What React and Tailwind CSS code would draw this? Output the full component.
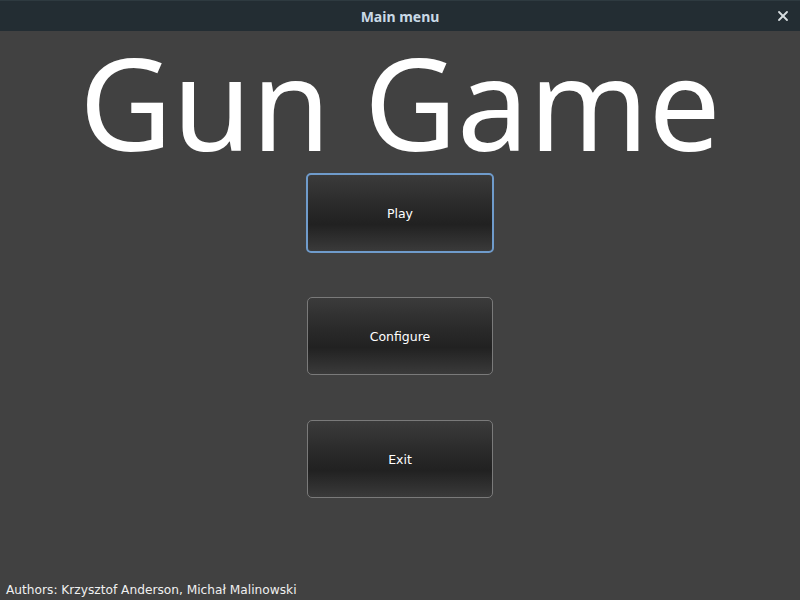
import { X } from 'lucide-react';

function MenuButton({ label, focused }) {
  return (
    <button
      className={`rounded-[5px] flex items-center justify-center pt-[2px] text-[12.5px] text-white bg-[linear-gradient(to_bottom,#3b3b3b_0%,#2a2a2a_40%,#212121_65%,#3a3a3a_100%)] ${
        focused ? 'w-[188px] h-[80px] border-2 border-[#6f9bcb]' : 'w-[186px] h-[78px] border border-[#7a7a7a]'
      }`}
      style={{ fontFamily: '"DejaVu Sans", sans-serif' }}
    >
      {label}
    </button>
  );
}

export default function App() {
  return (
    <div className="w-[800px] h-[600px] bg-[#414141] flex flex-col overflow-hidden" style={{ fontFamily: '"Noto Sans", sans-serif' }}>
      {/* Title bar */}
      <div className="h-[31px] bg-[#232d33] border-t border-[#2e3a40] relative flex items-center justify-center shrink-0">
        <span className="text-[14px] font-bold text-[#c9d9e6]">Main menu</span>
        <X className="absolute right-[9px] top-[7px] text-[#d7dde0]" size={16} strokeWidth={2.75} />
      </div>

      {/* Body */}
      <div className="flex-1 flex flex-col items-center relative">
        <h1 className="text-[128px] leading-none text-white mt-[7px] h-[135px]">Gun Game</h1>
        <div className="flex flex-col items-center">
          <MenuButton label="Play" focused />
          <div className="mt-[44px]"><MenuButton label="Configure" /></div>
          <div className="mt-[45px]"><MenuButton label="Exit" /></div>
        </div>
        <div className="mt-auto self-start pl-[6px] pb-[1px] text-[12.2px] text-[#f0f0f0]" style={{ fontFamily: '"DejaVu Sans", sans-serif' }}>
          Authors: Krzysztof Anderson, Michał Malinowski
        </div>
      </div>
    </div>
  );
}
